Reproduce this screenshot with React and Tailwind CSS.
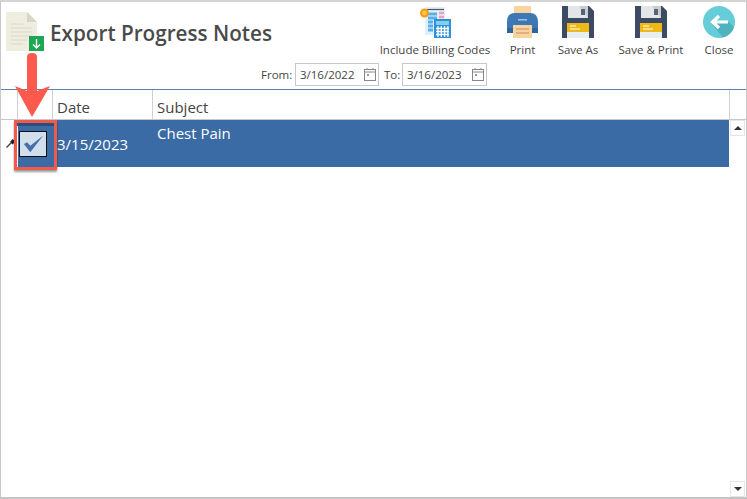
function DocIcon() {
  return (
    <svg width="38" height="39" viewBox="0 0 38 39" className="shrink-0">
      <path d="M0 0H21L31 10V39H0Z" fill="#efece0" />
      <path d="M21 0L31 10H21Z" fill="#d9d5c4" />
      <path d="M5 12H17M5 16H26M5 20H26M5 24H26M5 28H21M5 32H17" stroke="#e2dfd0" strokeWidth="1.5" />
      <rect x="23" y="24" width="15" height="15" fill="#1fa652" />
      <path d="M30.5 27V36M27 32.5L30.5 36L34 32.5" stroke="#fff" strokeWidth="1.4" fill="none" />
    </svg>
  );
}

function BillingIcon() {
  return (
    <svg width="31" height="32" viewBox="0 0 31 32">
      <rect x="5" y="1" width="20" height="28" fill="#dff0fa" />
      <path d="M7 3.5H24" stroke="#555" strokeWidth="1.2" />
      <path d="M8 8H17M8 12H17M8 16H13M8 20H13M8 24H13" stroke="#5aaee8" strokeWidth="3" />
      <path d="M19 7H24M19 11H24" stroke="#f2a0bd" strokeWidth="2.5" />
      <circle cx="4.5" cy="7" r="4.5" fill="#f39c12" />
      <circle cx="4.5" cy="7" r="2.4" fill="#f7c64f" />
      <rect x="14" y="13" width="17" height="19" fill="#2f8fd8" />
      <rect x="16" y="15" width="13" height="4" fill="#7fd3e8" />
      <path d="M18 20V31M21.3 20V31M24.6 20V31M27.9 20V31M16 22.5H29M16 25.5H29M16 28.5H29" stroke="#fff" strokeWidth="1.3" />
    </svg>
  );
}

function PrintIcon() {
  return (
    <svg width="33" height="32" viewBox="0 0 33 32">
      <rect x="8" y="0" width="17" height="9" fill="#fad3a3" />
      <path d="M1 16Q1 7 9 7H24Q32 7 32 16V27H1Z" fill="#3d78b4" />
      <path d="M1 22H32V27H1Z" fill="#2f659c" />
      <rect x="12" y="13" width="9" height="1.5" fill="#9cc1e2" />
      <rect x="7" y="19" width="19" height="13" fill="#fad3a3" />
      <path d="M10 23H23M10 27H23" stroke="#c98d55" strokeWidth="1" />
    </svg>
  );
}

function SaveIcon() {
  return (
    <svg width="32" height="32" viewBox="0 0 32 32">
      <path d="M0 0H27L32 5V32H0Z" fill="#3c4a63" />
      <rect x="6" y="0" width="20" height="12" fill="#e3e6e6" />
      <path d="M17 0H26V12Z" fill="#c9cdcd" />
      <rect x="19" y="3" width="4" height="6" fill="#56637a" />
      <rect x="5" y="17" width="22" height="15" fill="#e9eeee" />
      <rect x="5" y="17" width="22" height="9" fill="#eeb917" />
      <path d="M8 20H14M8 23H18" stroke="#fff" strokeWidth="1.2" />
    </svg>
  );
}

function CloseIcon() {
  return (
    <svg width="32" height="32" viewBox="0 0 32 32">
      <circle cx="16" cy="16" r="16" fill="#66cdd8" />
      <path d="M10 16L26 16L31 21A16 16 0 0 1 20 31.5L8 17Z" fill="#4fb2bf" />
      <path d="M25 16H10M16 10L9.5 16L16 22" stroke="#fff" strokeWidth="3.2" fill="none" />
    </svg>
  );
}

function CalendarIcon() {
  return (
    <svg width="12" height="13" viewBox="0 0 12 13" className="shrink-0">
      <rect x="0.5" y="1.5" width="11" height="11" fill="none" stroke="#888" />
      <path d="M0.5 4H11.5" stroke="#888" />
      <path d="M3 0V2M9 0V2" stroke="#888" />
      <rect x="3" y="6" width="2" height="2" fill="#999" />
    </svg>
  );
}

function ToolButton({ icon, label, className }) {
  return (
    <div className={`flex flex-col items-center ${className}`}>
      <div className="h-[32px] flex items-center justify-center">{icon}</div>
      <span className="mt-[4px] text-[11.5px] leading-[16px] text-[#444] whitespace-nowrap">
        {label}
      </span>
    </div>
  );
}

function DateBox({ value, className }) {
  return (
    <div className={`h-[23px] border border-[#c8c8c8] flex items-center justify-between pl-[4px] pr-[2px] ${className}`}>
      <span>{value}</span>
      <CalendarIcon />
    </div>
  );
}

export default function App() {
  return (
    <div
      className="relative w-[747px] h-[499px] bg-white border-t-2 border-b-2 border-x border-t-[#d4d4d4] border-b-[#c4c4c4] border-x-[#c8c8c8] overflow-hidden flex flex-col"
      style={{ fontFamily: '"Open Sans", "Noto Sans", sans-serif' }}
    >
      <div className="h-[88px] flex shrink-0 border-b border-[#5b80ab]">
        <div className="flex pl-[5px] pt-[10px] w-[280px]">
          <DocIcon />
          <h1 className="ml-[6px] mt-[6px] text-[20.7px] leading-[30px] font-semibold text-[#4a4a4a] whitespace-nowrap">
            Export Progress Notes
          </h1>
        </div>
        <div className="flex-1 flex flex-col">
          <div className="flex pt-[4px] pl-[98px]">
            <ToolButton icon={<BillingIcon />} label="Include Billing Codes" className="w-[112px]" />
            <ToolButton icon={<PrintIcon />} label="Print" className="w-[63px]" />
            <ToolButton icon={<SaveIcon />} label="Save As" className="w-[48px]" />
            <ToolButton icon={<SaveIcon />} label="Save & Print" className="w-[98px]" />
            <ToolButton icon={<CloseIcon />} label="Close" className="w-[38px]" />
          </div>
          <div className="mt-[5px] ml-[-20px] flex items-center text-[11.5px] text-[#444]">
            <span className="w-[34px]">From:</span>
            <DateBox value="3/16/2022" className="w-[84px]" />
            <span className="ml-[5px] w-[18px]">To:</span>
            <DateBox value="3/16/2023" className="w-[85px]" />
          </div>
        </div>
      </div>

      <div className="h-[30px] flex shrink-0 border-b border-[#c8c8c8] text-[15px] text-[#444]">
        <div className="w-[17px] border-r border-[#d0d0d0]" />
        <div className="w-[35px] border-r border-[#d0d0d0]" />
        <div className="w-[100px] border-r border-[#d0d0d0] pl-[4px] leading-[34px]">Date</div>
        <div className="w-[577px] border-r border-[#d0d0d0] pl-[4px] leading-[34px]">Subject</div>
        <div className="flex-1" />
      </div>

      <div className="flex-1 flex min-h-0">
        <div className="w-[17px] h-[47px] flex items-center justify-center">
          <svg width="10" height="10" viewBox="0 0 10 10" className="ml-[2px] mt-[-1px]">
            <path d="M0.5 9.5L5 5" stroke="#444" strokeWidth="1.4" />
            <path d="M4 4L6.5 1L9.5 3.5L6.5 6.5Z" fill="#222" />
          </svg>
        </div>
        <div className="w-[711px] h-[47px] bg-[#3a6ba5] flex text-white text-[15px]">
          <div className="w-[35px]" />
          <div className="w-[100px] pl-[4px] pt-[14px] leading-[20px]">3/15/2023</div>
          <div className="pl-[4px] pt-[3px] leading-[20px]">Chest Pain</div>
        </div>
        <div className="flex-1 flex flex-col justify-between">
          <div className="w-[15px] h-[16px] ml-[1px] border border-[#e6e6e6] flex items-center justify-center">
            <div className="w-0 h-0 border-x-[4px] border-x-transparent border-b-[4px] border-b-[#333]" />
          </div>
          <div className="w-[15px] h-[16px] ml-[1px] border border-[#e6e6e6] flex items-center justify-center">
            <div className="w-0 h-0 border-x-[4px] border-x-transparent border-t-[4px] border-t-[#333]" />
          </div>
        </div>
      </div>

      {/* annotation: red box + arrow over the checkbox */}
      <div className="absolute left-[13px] top-[118px] w-[43px] h-[50px] border-[3px] border-[#f0594c] shadow-[0_2px_2px_rgba(0,0,0,0.4)]">
        <div className="h-[3px] bg-[#2a4f7c]" />
        <div className="ml-[2px] mt-[5px] w-[28px] h-[26px] border border-[#111] bg-[#d3deec] flex items-center justify-center">
          <svg width="22" height="20" viewBox="0 0 24 22">
            <path d="M2 11L9 20L23 2L9 13L5.5 9Z" fill="#4470aa" />
          </svg>
        </div>
      </div>
      <svg width="36" height="65" viewBox="0 0 36 65" className="absolute left-[14px] top-[51px]">
        <path d="M12 4Q12 0 17 0Q22 0 22 4V38L35 33L17 64L0 33L12 38Z" fill="#fb5a4c" />
      </svg>
    </div>
  );
}
